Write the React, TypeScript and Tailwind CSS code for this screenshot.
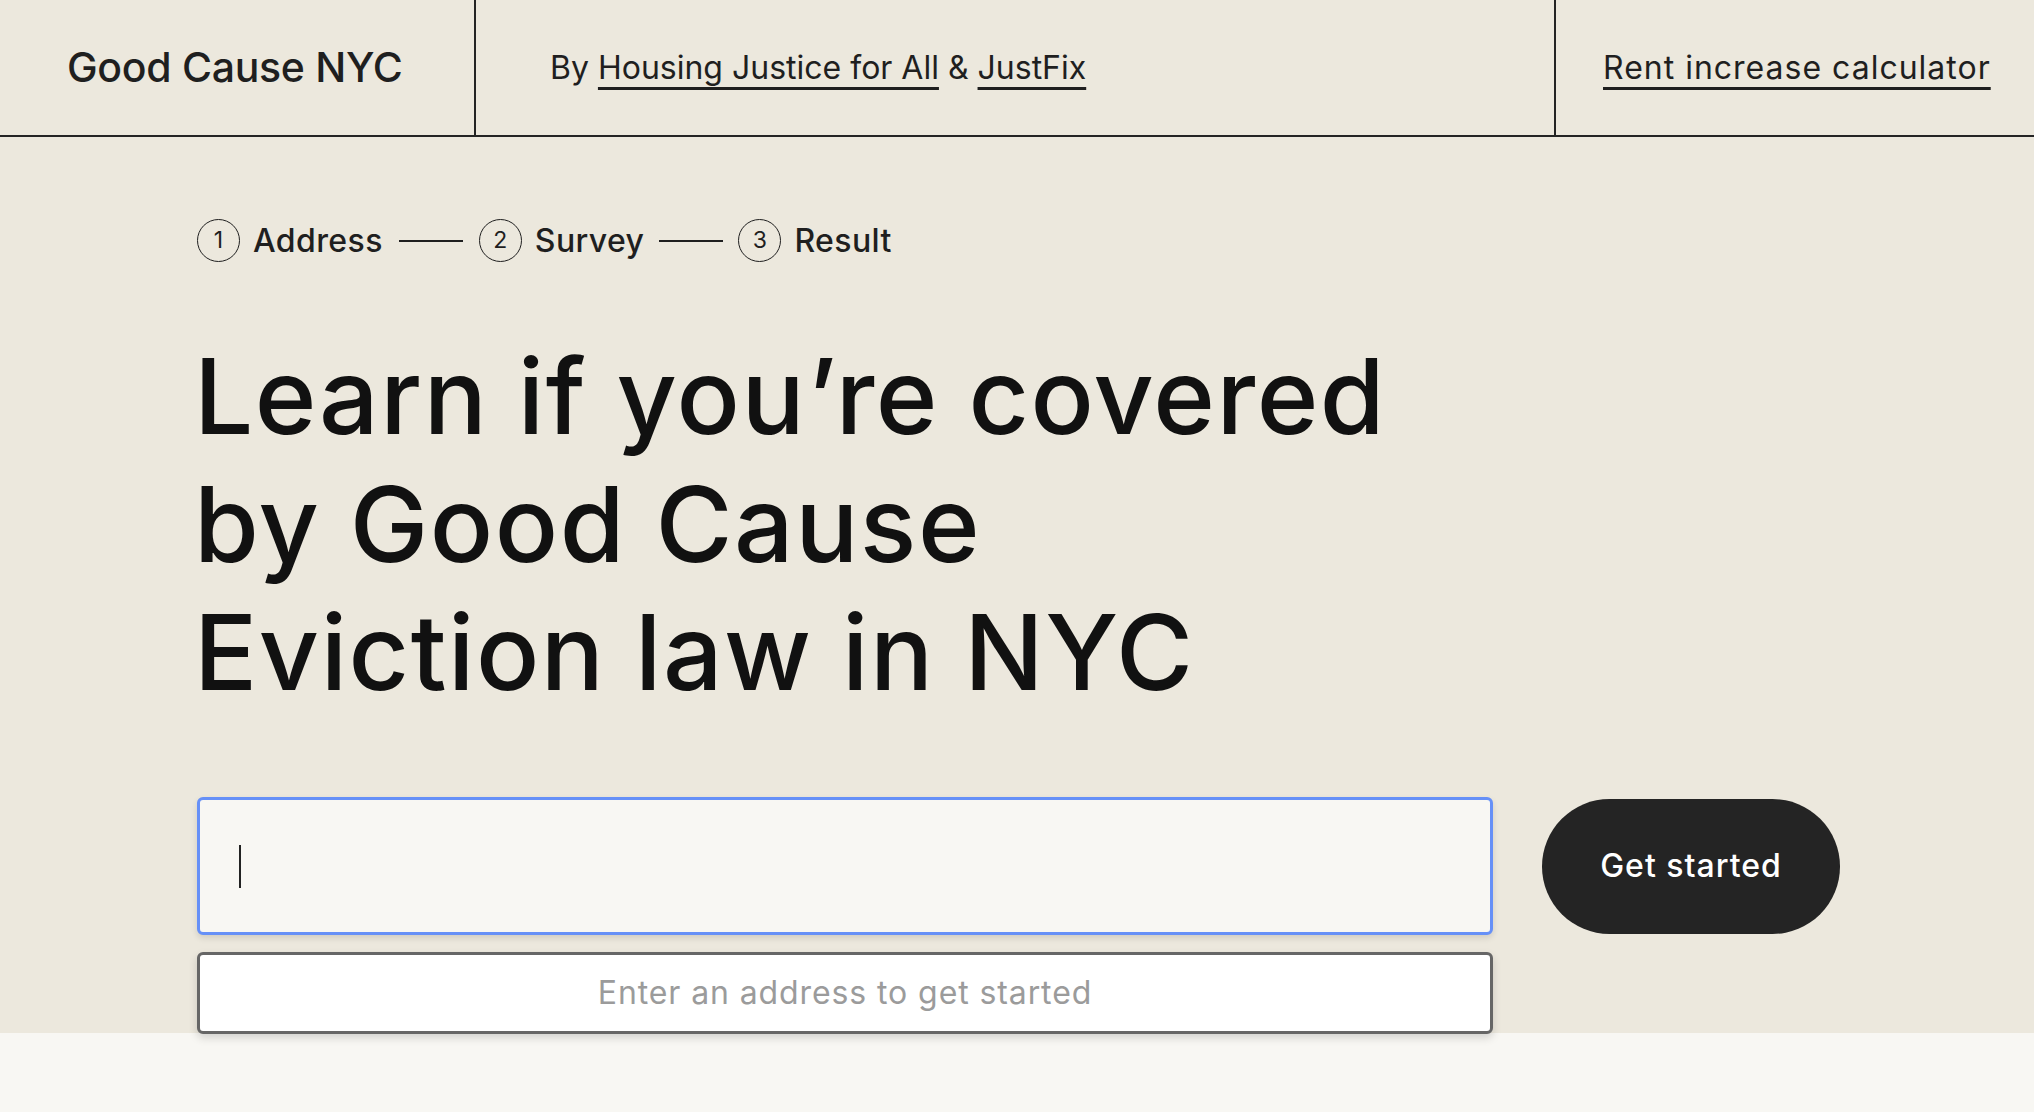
import React from "react";

const font = { fontFamily: "Inter, 'Noto Sans', sans-serif" };

function Step({ n, label }: { n: number; label: string }) {
  return (
    <div className="flex items-center gap-[13px]">
      <div className="w-[43px] h-[43px] rounded-full border-[1.5px] border-[#1f1f1f] flex items-center justify-center text-[23px] leading-none">
        {n}
      </div>
      <span className="text-[32px] leading-none font-medium tracking-[0.4px]">{label}</span>
    </div>
  );
}

export default function App() {
  return (
    <div className="min-h-screen bg-[#f8f7f3] text-[#1f1f1f]" style={font}>
      <header className="h-[137px] flex border-b-2 border-[#242424] bg-[#ece8dd]">
        <div className="w-[476px] shrink-0 border-r-2 border-[#242424] flex items-center pl-[67px]">
          <span className="text-[41px] font-medium tracking-[-0.3px]">Good Cause NYC</span>
        </div>
        <div className="flex-1 flex items-center pl-[74px] text-[32px]">
          <span>
            By{" "}
            <a className="underline decoration-[3px] underline-offset-[8px]">Housing Justice for All</a>{" "}
            &amp;{" "}
            <a className="underline decoration-[3px] underline-offset-[8px]">JustFix</a>
          </span>
        </div>
        <div className="w-[480px] shrink-0 border-l-2 border-[#242424] flex items-center pl-[47px]">
          <a className="text-[32px] underline decoration-[3px] underline-offset-[8px] tracking-[1px]">
            Rent increase calculator
          </a>
        </div>
      </header>

      <main className="h-[896px] bg-[#ece8dd] pl-[197px] pt-[82px]">
        <div className="flex items-center">
          <Step n={1} label="Address" />
          <div className="w-[64px] h-[2px] bg-[#1f1f1f] mx-[16px]" />
          <Step n={2} label="Survey" />
          <div className="w-[64px] h-[2px] bg-[#1f1f1f] mx-[15px]" />
          <Step n={3} label="Result" />
        </div>

        <h1 className="mt-[70px] -ml-[3px] text-[105px] leading-[128px] font-medium tracking-[1.5px] text-[#111]">
          Learn if you’re covered
          <br />
          by Good Cause
          <br />
          Eviction law in NYC
        </h1>

        <div className="mt-[81px] flex items-center gap-[49px]">
          <div className="relative w-[1296px]">
            <div className="h-[138px] rounded-[6px] border-[3px] border-[#6690f7] bg-[#f8f7f3] flex items-center pl-[39px] shadow-[0_3px_6px_rgba(0,0,0,0.12)]">
              <div className="w-[1.5px] h-[43px] bg-[#222]" />
            </div>
            <div className="absolute left-0 right-0 top-[155px] h-[82px] rounded-[6px] border-[3px] border-[#666] bg-white flex items-center justify-center shadow-[0_4px_8px_rgba(0,0,0,0.15)]">
              <span className="text-[32px] tracking-[0.9px] text-[#9b9b9b]">Enter an address to get started</span>
            </div>
          </div>
          <button className="w-[298px] h-[135px] rounded-full bg-[#242424] text-white text-[32px] tracking-[1px] font-medium">
            Get started
          </button>
        </div>
      </main>
    </div>
  );
}
